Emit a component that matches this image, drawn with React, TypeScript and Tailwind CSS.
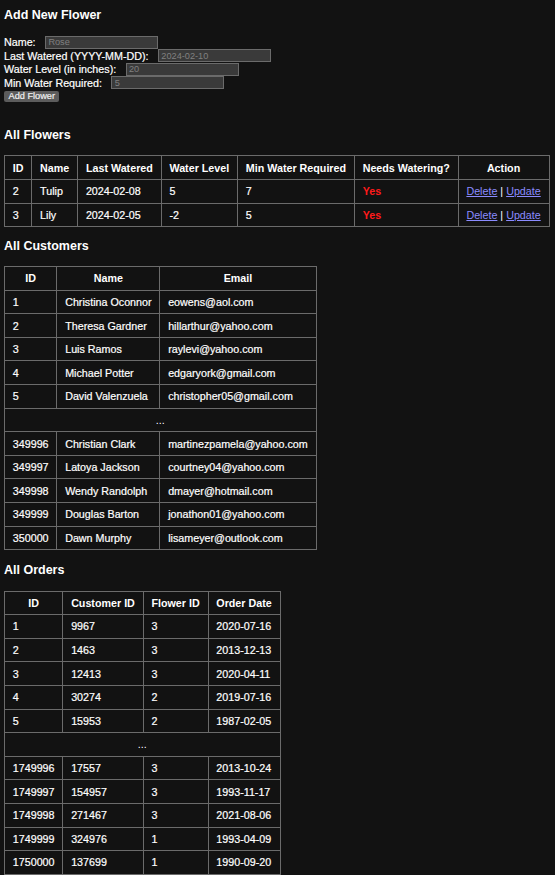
import React from "react";

const flowers = [
  { id: 2, name: "Tulip", last: "2024-02-08", level: "5", min: "7" },
  { id: 3, name: "Lily", last: "2024-02-05", level: "-2", min: "5" },
];

const customersHead = [
  ["1", "Christina Oconnor", "eowens@aol.com"],
  ["2", "Theresa Gardner", "hillarthur@yahoo.com"],
  ["3", "Luis Ramos", "raylevi@yahoo.com"],
  ["4", "Michael Potter", "edgaryork@gmail.com"],
  ["5", "David Valenzuela", "christopher05@gmail.com"],
];
const customersTail = [
  ["349996", "Christian Clark", "martinezpamela@yahoo.com"],
  ["349997", "Latoya Jackson", "courtney04@yahoo.com"],
  ["349998", "Wendy Randolph", "dmayer@hotmail.com"],
  ["349999", "Douglas Barton", "jonathon01@yahoo.com"],
  ["350000", "Dawn Murphy", "lisameyer@outlook.com"],
];

const ordersHead = [
  ["1", "9967", "3", "2020-07-16"],
  ["2", "1463", "3", "2013-12-13"],
  ["3", "12413", "3", "2020-04-11"],
  ["4", "30274", "2", "2019-07-16"],
  ["5", "15953", "2", "1987-02-05"],
];
const ordersTail = [
  ["1749996", "17557", "3", "2013-10-24"],
  ["1749997", "154957", "3", "1993-11-17"],
  ["1749998", "271467", "3", "2021-08-06"],
  ["1749999", "324976", "1", "1993-04-09"],
  ["1750000", "137699", "1", "1990-09-20"],
];

const cell = "whitespace-nowrap border border-[#6b6b6b] px-[7.8px] py-[5.3px] leading-[12px] text-white";
const th = cell + " font-bold text-center";
const td = cell + " text-left [-webkit-text-stroke:0.2px_currentColor]";
const tdPlain = cell + " text-center";
const h3 = "text-[12.5px] leading-[14.4px] font-bold text-white";

function FormRow({ label, placeholder }: { label: string; placeholder: string }) {
  return (
    <div className="flex h-[13.6px] items-center">
      <label className="leading-[12px] whitespace-nowrap [-webkit-text-stroke:0.2px_currentColor]">{label}</label>
      <input
        type="text"
        placeholder={placeholder}
        className="ml-[9.5px] h-[13px] w-[113px] border border-[#6b6b6b] bg-[#3a3a3a] px-[2.3px] text-[9.2px] leading-[11px] text-[#ddd] outline-none placeholder:text-[#808080]"
      />
    </div>
  );
}

function DataTable({
  headers,
  head,
  tail,
}: {
  headers: string[];
  head: string[][];
  tail: string[][];
}) {
  return (
    <table className="border-collapse border border-[#6b6b6b]">
      <thead>
        <tr>
          {headers.map((h) => (
            <th key={h} className={th}>
              {h}
            </th>
          ))}
        </tr>
      </thead>
      <tbody>
        {head.map((r) => (
          <tr key={r[0]}>
            {r.map((c, i) => (
              <td key={i} className={td}>
                {c}
              </td>
            ))}
          </tr>
        ))}
        <tr>
          <td colSpan={headers.length} className={tdPlain}>
            ...
          </td>
        </tr>
        {tail.map((r) => (
          <tr key={r[0]}>
            {r.map((c, i) => (
              <td key={i} className={td}>
                {c}
              </td>
            ))}
          </tr>
        ))}
      </tbody>
    </table>
  );
}

export default function App() {
  return (
    <div className="min-h-[875px] bg-[#121212] px-[4px] pt-[8px] pb-[4px] font-['Liberation_Sans',Arial,sans-serif] text-[10.72px] text-white">
      <h3 className={h3 + " mb-[13px]"}>Add New Flower</h3>
      <form onSubmit={(e) => e.preventDefault()}>
        <FormRow label="Name:" placeholder="Rose" />
        <FormRow label="Last Watered (YYYY-MM-DD):" placeholder="2024-02-10" />
        <FormRow label="Water Level (in inches):" placeholder="20" />
        <FormRow label="Min Water Required:" placeholder="5" />
        <button
          type="submit"
          className="mt-[0.9px] block h-[11.6px] rounded-[2px] bg-[#5c5c5c] px-[4.5px] text-[9.2px] leading-[11.6px] text-[#f0f0f0] [-webkit-text-stroke:0.2px_currentColor]"
        >
          Add Flower
        </button>
      </form>

      <h3 className={h3 + " mt-[26.2px] mb-[12.5px]"}>All Flowers</h3>
      <table className="border-collapse border border-[#6b6b6b]">
        <thead>
          <tr>
            {["ID", "Name", "Last Watered", "Water Level", "Min Water Required", "Needs Watering?", "Action"].map(
              (h) => (
                <th key={h} className={th}>
                  {h}
                </th>
              )
            )}
          </tr>
        </thead>
        <tbody>
          {flowers.map((f) => (
            <tr key={f.id}>
              <td className={td}>{f.id}</td>
              <td className={td}>{f.name}</td>
              <td className={td}>{f.last}</td>
              <td className={td}>{f.level}</td>
              <td className={td}>{f.min}</td>
              <td className={cell + " text-left"}>
                <span className="font-bold text-[#ff1a1a]">Yes</span>
              </td>
              <td className={tdPlain}>
                <a href="#" className="text-[#8b8bff] underline">
                  Delete
                </a>{" "}
                |{" "}
                <a href="#" className="text-[#8b8bff] underline">
                  Update
                </a>
              </td>
            </tr>
          ))}
        </tbody>
      </table>

      <h3 className={h3 + " mt-[12px] mb-[12.5px]"}>All Customers</h3>
      <DataTable headers={["ID", "Name", "Email"]} head={customersHead} tail={customersTail} />

      <h3 className={h3 + " mt-[13px] mb-[13px]"}>All Orders</h3>
      <DataTable
        headers={["ID", "Customer ID", "Flower ID", "Order Date"]}
        head={ordersHead}
        tail={ordersTail}
      />
    </div>
  );
}
